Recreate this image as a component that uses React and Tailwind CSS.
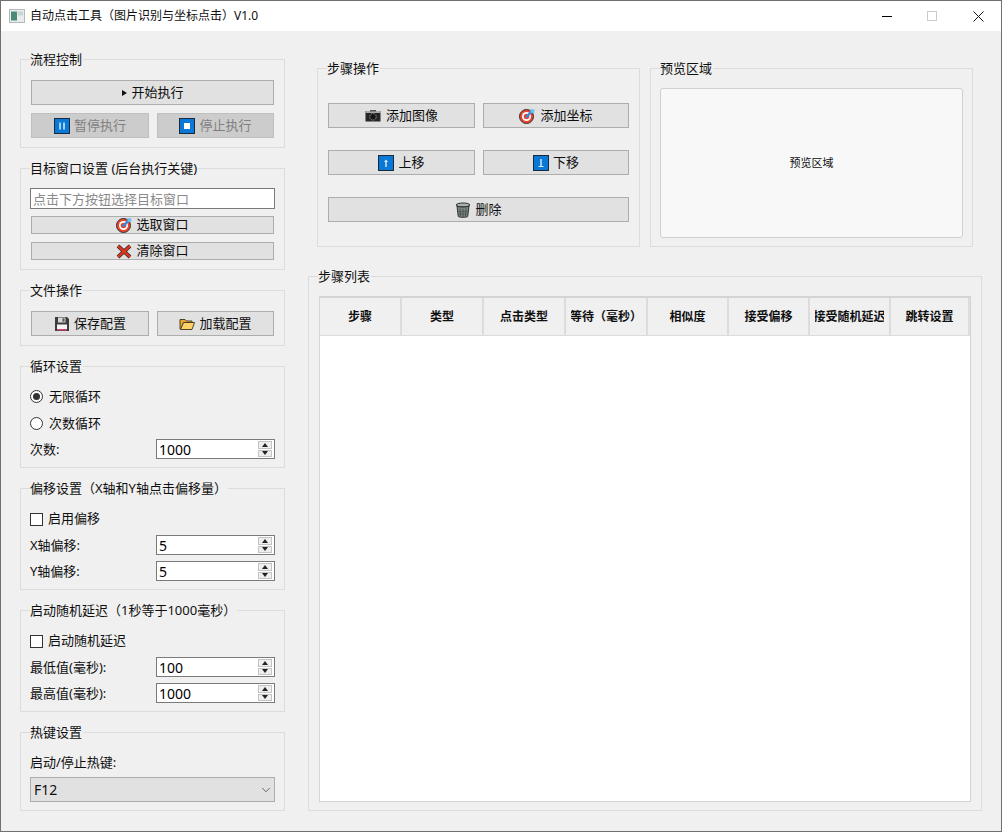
import { ChevronDown } from "lucide-react";

const Play = () => (
  <svg width="16" height="16" viewBox="0 0 16 16"><path d="M7 5l5 3-5 3z" fill="#111" /></svg>
);

const BlueBox = ({ children }) => (
  <svg width="16" height="16" viewBox="0 0 16 16">
    <rect x="0.5" y="0.5" width="15" height="15" fill="#0a78d7" stroke="#1a2a3a" />
    {children}
  </svg>
);

const Target = () => (
  <svg width="16" height="16" viewBox="0 0 16 16">
    <circle cx="7.500" cy="8.500" r="7" fill="#e8452c" stroke="#333" />
    <circle cx="7.500" cy="8.500" r="4.500" fill="#fff" />
    <circle cx="7.500" cy="8.500" r="2.800" fill="#e8452c" />
    <path d="M7 9.500L12.500 3.500" stroke="#2a8be0" strokeWidth="2.400" />
    <path d="M11.500 1l4 .5-.5 4-3.500-1z" fill="#6cc0f5" />
  </svg>
);

const Cross = () => (
  <svg width="16" height="16" viewBox="0 0 16 16">
    <path d="M2 3l12 11M14 3L2 14" stroke="#2a2a2a" strokeWidth="3.800" />
    <path d="M2 3l12 11M14 3L2 14" stroke="#e0341c" strokeWidth="2.400" />
  </svg>
);

const Floppy = () => (
  <svg width="16" height="16" viewBox="0 0 16 16">
    <path d="M1 1h12l2 2v12H1z" fill="#3c3c3c" />
    <rect x="4" y="1.500" width="7.500" height="5" fill="#d8d8d8" />
    <rect x="8.500" y="2.300" width="2" height="3.400" fill="#555" />
    <rect x="3" y="8.500" width="10" height="4.500" fill="#f4f4f4" />
    <rect x="3" y="13" width="10" height="1.500" fill="#d0447c" />
  </svg>
);

const Folder = () => (
  <svg width="16" height="16" viewBox="0 0 16 16">
    <path d="M1 13V3.500h5l1.500 1.500H13v2H4.500L2.500 13z" fill="#e9a92e" stroke="#3d3320" strokeWidth="0.900" />
    <path d="M1.500 13.500L4.500 6.500h11L13 13.500z" fill="#fbd26a" stroke="#3d3320" strokeWidth="0.900" />
  </svg>
);

const Camera = () => (
  <svg width="16" height="16" viewBox="0 0 16 16">
    <rect x="0.500" y="3" width="15" height="10.500" fill="#262626" />
    <rect x="0.500" y="3" width="15" height="2" fill="#a8a8a8" />
    <rect x="5" y="2" width="6" height="1.500" fill="#555" />
    <circle cx="8" cy="8.800" r="3.200" fill="#151515" stroke="#c4c4c4" strokeWidth="0.800" strokeDasharray="1 0.800" />
  </svg>
);

const Trash = () => (
  <svg width="16" height="16" viewBox="0 0 16 16">
    <ellipse cx="8" cy="3" rx="6.800" ry="2" fill="#aab2b2" stroke="#2e2e2e" />
    <path d="M2 4l1.300 10.500c.2 1 9.200 1 9.400 0L14 4c-1.500 1.300-10.500 1.300-12 0z" fill="#7c8686" stroke="#2e2e2e" />
    <path d="M5 6.500l.5 7.500M8 7v7.500M11 6.500l-.5 7.500" stroke="#454b4b" strokeWidth="0.900" />
    <path d="M3.500 9.500h9M4 12h8" stroke="#454b4b" strokeWidth="0.600" />
  </svg>
);

const PauseIcon = () => (
  <BlueBox>
    <rect x="5" y="4.500" width="2" height="7" fill="#9fd0f5" />
    <rect x="9" y="4.500" width="2" height="7" fill="#9fd0f5" />
  </BlueBox>
);

const StopIcon = () => (
  <BlueBox>
    <rect x="5" y="5" width="6" height="6" fill="#fff" />
  </BlueBox>
);

const UpIcon = () => (
  <BlueBox>
    <path d="M8 4.500l2 2.500H8.700v5H7.300V7H6z" fill="#d8ecfb" />
  </BlueBox>
);

const DownIcon = () => (
  <BlueBox>
    <path d="M7.300 4h1.400v7H10.500v1H5.500v-1h1.800z" fill="#d8ecfb" />
  </BlueBox>
);

const Group = ({ title, className, children }) => (
  <div className={`relative border border-[#dcdcdc] ${className}`}>
    <div className="absolute left-[9px] top-[-10px] bg-[#f0f0f0] pr-px leading-[18px] whitespace-nowrap text-[#0f0f0f]">
      {title}
    </div>
    {children}
  </div>
);

const Btn = ({ icon, gap = "gap-[4px]", disabled, className = "", children }) => (
  <div
    className={`flex items-center justify-center border ${gap} ${
      disabled
        ? "border-[#bfbfbf] bg-[#cccccc] text-[#808080]"
        : "border-[#adadad] bg-[#e1e1e1] text-[#0f0f0f]"
    } ${className}`}
  >
    {icon}
    <span>{children}</span>
  </div>
);

const Spin = ({ label, value }) => (
  <div className="flex h-[20px] items-center justify-between">
    <span className="pt-px text-[#0f0f0f]">{label}</span>
    <div className="flex h-[20px] w-[119px] items-center justify-between border border-[#7a7a7a] bg-white pr-[2px] pl-[2px]">
      <span className="pt-px text-[14px] leading-none text-black">{value}</span>
      <div className="flex h-[16px] w-[14px] flex-col gap-px">
        <div className="flex h-[8px] items-center justify-center border border-[#c4c4c4] bg-[#eeeeee]">
          <div className="h-0 w-0 border-x-[3.5px] border-b-[4px] border-x-transparent border-b-[#222]" />
        </div>
        <div className="flex h-[8px] items-center justify-center border border-[#c4c4c4] bg-[#eeeeee]">
          <div className="h-0 w-0 border-x-[3.5px] border-t-[4px] border-x-transparent border-t-[#222]" />
        </div>
      </div>
    </div>
  </div>
);

const Radio = ({ checked, children }) => (
  <div className="flex h-[20px] items-center gap-[6px] text-[#0f0f0f]">
    <div className="flex h-[13px] w-[13px] items-center justify-center rounded-full border border-[#333] bg-white">
      {checked && <div className="h-[7px] w-[7px] rounded-full bg-[#333]" />}
    </div>
    <span className="pt-px">{children}</span>
  </div>
);

const Check = ({ children }) => (
  <div className="flex h-[20px] items-center gap-[5px] text-[#0f0f0f]">
    <div className="h-[13px] w-[13px] border border-[#333] bg-white" />
    {children}
  </div>
);

const columns = ["步骤", "类型", "点击类型", "等待（毫秒）", "相似度", "接受偏移", "接受随机延迟", "跳转设置"];

export default function App() {
  return (
    <div className="flex h-[832px] w-[1002px] flex-col border border-[#707070] bg-[#f0f0f0] font-['Noto_Sans','Noto_Sans_CJK_SC',sans-serif] text-[13px]">
      {/* title bar */}
      <div className="flex h-[30px] shrink-0 items-center bg-white pl-[8px] text-[12px] text-[#0f0f0f]">
        <svg width="16" height="14" viewBox="0 0 16 14">
          <rect x="0.500" y="0.500" width="15" height="13" fill="#e8ecec" stroke="#b4baba" />
          <rect x="2" y="2.500" width="6" height="9" fill="#4a8a78" />
          <rect x="9" y="2.500" width="5" height="4" fill="#c8d6d6" />
        </svg>
        <span className="ml-[5px]">自动点击工具（图片识别与坐标点击）V1.0</span>
        <div className="ml-auto flex items-center pr-[17px]">
          <div className="h-px w-[10px] bg-black" />
          <div className="ml-[35px] h-[10px] w-[10px] border border-[#cccccc]" />
          <svg className="ml-[36px]" width="11" height="11" viewBox="0 0 11 11">
            <path d="M.5.5l10 10M10.500.5l-10 10" stroke="#111" />
          </svg>
        </div>
      </div>

      <div className="flex gap-[23px] pt-[28px] pl-[19px]">
        {/* left column */}
        <div className="flex w-[265px] shrink-0 flex-col gap-[20px]">
          <Group title="流程控制" className="flex h-[89px] flex-col gap-[8px] px-[10px] pt-[20px]">
            <Btn icon={<Play />} gap="gap-0" className="h-[25px] pr-[6px]">开始执行</Btn>
            <div className="flex gap-[8px]">
              <Btn icon={<PauseIcon />} disabled className="h-[25px] w-[118px]">暂停执行</Btn>
              <Btn icon={<StopIcon />} disabled className="h-[25px] flex-1">停止执行</Btn>
            </div>
          </Group>

          <Group title="目标窗口设置 (后台执行关键)" className="flex h-[102px] flex-col px-[9px] pt-[19px]">
            <input
              readOnly
              placeholder="点击下方按钮选择目标窗口"
              className="h-[21px] border border-[#7a7a7a] bg-white px-[2px] text-[13px] outline-none placeholder:text-[#8a8a8a]"
            />
            <Btn icon={<Target />} className="mx-px mt-[7px] h-[18px]">选取窗口</Btn>
            <Btn icon={<Cross />} className="mx-px mt-[8px] h-[18px]">清除窗口</Btn>
          </Group>

          <Group title="文件操作" className="flex h-[56px] gap-[8px] px-[10px] pt-[20px]">
            <Btn icon={<Floppy />} className="h-[25px] w-[118px]">保存配置</Btn>
            <Btn icon={<Folder />} className="h-[25px] flex-1">加载配置</Btn>
          </Group>

          <Group title="循环设置" className="flex h-[102px] flex-col px-[9px] pt-[19px]">
            <Radio checked>无限循环</Radio>
            <div className="mt-[7px]"><Radio>次数循环</Radio></div>
            <div className="mt-[6px]"><Spin label="次数:" value="1000" /></div>
          </Group>

          <Group title="偏移设置（X轴和Y轴点击偏移量）" className="flex h-[102px] flex-col gap-[6px] px-[9px] pt-[20px]">
            <Check>启用偏移</Check>
            <Spin label="X轴偏移:" value="5" />
            <Spin label="Y轴偏移:" value="5" />
          </Group>

          <Group title="启动随机延迟（1秒等于1000毫秒）" className="flex h-[102px] flex-col gap-[6px] px-[9px] pt-[20px]">
            <Check>启动随机延迟</Check>
            <Spin label="最低值(毫秒):" value="100" />
            <Spin label="最高值(毫秒):" value="1000" />
          </Group>

          <Group title="热键设置" className="flex h-[79px] flex-col px-[9px] pt-[19px]">
            <div className="h-[20px] leading-[20px] text-[#0f0f0f]">启动/停止热键:</div>
            <div className="mt-[5px] flex h-[25px] items-center justify-between border border-[#adadad] bg-[#e1e1e1] pr-px pl-[3px] text-[#0f0f0f]">
              <span className="text-[14px]">F12</span>
              <ChevronDown size={14} strokeWidth={1.2} color="#333" />
            </div>
          </Group>
        </div>

        {/* right column */}
        <div className="mt-[9px] flex w-[674px] flex-col gap-[29px]">
          <div className="flex gap-[10px] px-[9px]">
            <Group title="步骤操作" className="flex h-[179px] w-[323px] flex-col gap-[22px] px-[10px] pt-[34px]">
              <div className="flex gap-[8px]">
                <Btn icon={<Camera />} gap="gap-[5px]" className="h-[25px] w-[147px]">添加图像</Btn>
                <Btn icon={<Target />} gap="gap-[5px]" className="h-[25px] flex-1">添加坐标</Btn>
              </div>
              <div className="flex gap-[8px]">
                <Btn icon={<UpIcon />} className="h-[25px] w-[147px]">上移</Btn>
                <Btn icon={<DownIcon />} className="h-[25px] flex-1">下移</Btn>
              </div>
              <Btn icon={<Trash />} className="h-[25px]">删除</Btn>
            </Group>
            <Group title="预览区域" className="h-[179px] w-[323px] px-[9px] pt-[19px]">
              <div className="flex h-[150px] items-center justify-center rounded-[3px] border border-[#d0d0d0] bg-[#f8f8f8] text-[11px] text-[#0f0f0f]">
                预览区域
              </div>
            </Group>
          </div>

          <Group title="步骤列表" className="h-[535px] px-[10px] pt-[19px]">
            <div className="h-[506px] border border-t-2 border-[#d4d4d4] bg-white">
              <div className="grid h-[38px] grid-cols-[82px_82px_82px_82px_81px_81px_81px_79px] border-b border-[#dcdcdc] bg-[#f0f0f0] text-[12px] font-bold text-[#0f0f0f]">
                {columns.map((name) => (
                  <div key={name} className="flex items-center justify-center border-r-2 border-[#dcdcdc] px-[5px]">
                    <div className="flex w-full justify-center overflow-hidden whitespace-nowrap">{name}</div>
                  </div>
                ))}
              </div>
            </div>
          </Group>
        </div>
      </div>
    </div>
  );
}
